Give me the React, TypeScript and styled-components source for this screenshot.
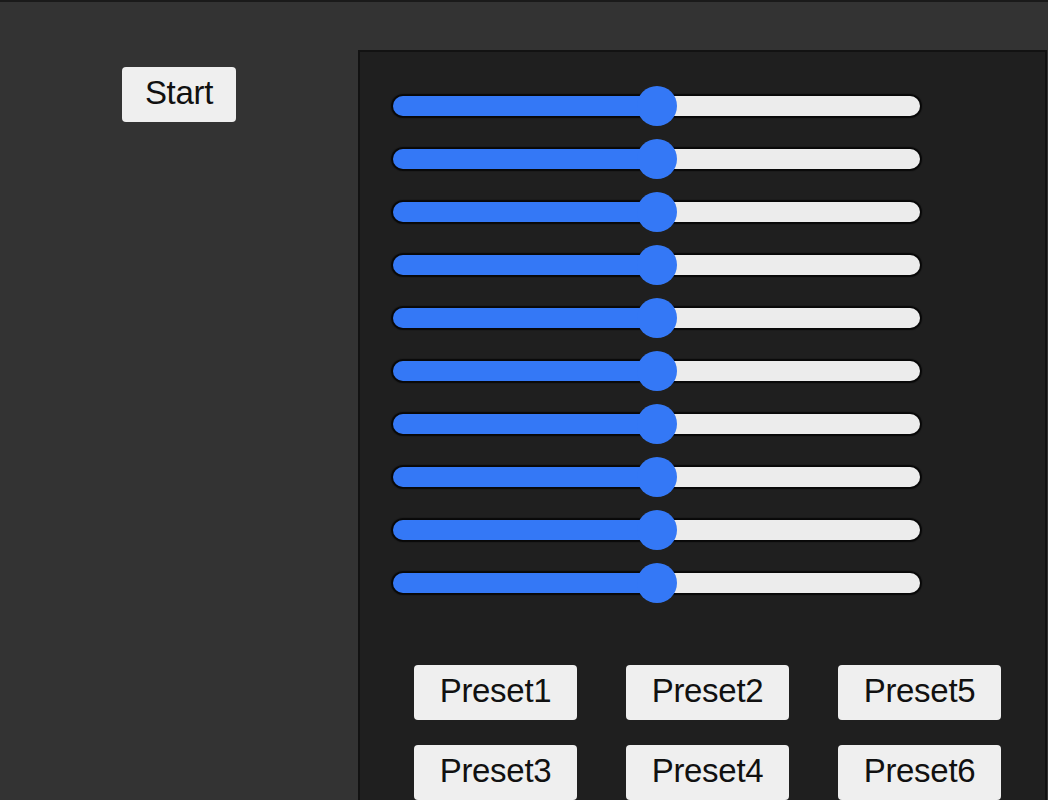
import React, { useState } from "react";
import styled, { createGlobalStyle } from "styled-components";

const GlobalStyle = createGlobalStyle`
  html, body {
    margin: 0;
    padding: 0;
    background: #333333;
    height: 800px;
    overflow: hidden;
  }
`;

const Screen = styled.div`
  display: flex;
  height: 798px;
  border-top: 2px solid #1a1a1a;
  font-family: "Liberation Sans", Arial, sans-serif;
`;

const SideColumn = styled.div`
  width: 358px;
  flex-shrink: 0;
  display: flex;
  justify-content: center;
  align-items: flex-start;
  padding-top: 65px;
`;

const Button = styled.button<{ $width: number }>`
  width: ${(p) => p.$width}px;
  height: 55px;
  padding: 0 0 5px;
  border: none;
  border-radius: 4px;
  background: #efefef;
  color: #111111;
  font-family: "Liberation Sans", Arial, sans-serif;
  font-size: 33px;
  line-height: 1;
  letter-spacing: -0.3px;
  cursor: pointer;
`;

const Panel = styled.div`
  margin-top: 48px;
  width: 685px;
  height: 760px;
  background: #1f1f1f;
  border: 2px solid #121212;
  border-bottom: none;
`;

const SliderList = styled.div`
  display: flex;
  flex-direction: column;
  padding: 27px 0 0 33px;
`;

const SliderRow = styled.div`
  height: 53px;
  display: flex;
  align-items: center;
`;

const Range = styled.input<{ $pct: number }>`
  -webkit-appearance: none;
  appearance: none;
  width: 527px;
  height: 20px;
  margin: 0;
  border-radius: 10px;
  box-shadow: 0 0 1px 2px #080808;
  outline: none;
  background: linear-gradient(
    to right,
    #3478f6 0%,
    #3478f6 ${(p) => p.$pct}%,
    #ececec ${(p) => p.$pct}%,
    #ececec 100%
  );

  &::-webkit-slider-thumb {
    -webkit-appearance: none;
    appearance: none;
    width: 40px;
    height: 40px;
    border-radius: 50%;
    background: #3478f6;
    border: none;
    cursor: pointer;
  }
`;

const PresetGrid = styled.div`
  display: grid;
  grid-template-columns: repeat(3, 163px);
  column-gap: 49px;
  row-gap: 25px;
  padding: 56px 0 0 54px;
`;

const presets = ["Preset1", "Preset2", "Preset5", "Preset3", "Preset4", "Preset6"];

const App: React.FC = () => {
  const [values, setValues] = useState<number[]>(Array(10).fill(50));

  const onChangeValue = (index: number) => (e: React.ChangeEvent<HTMLInputElement>) => {
    const next = [...values];
    next[index] = Number(e.target.value);
    setValues(next);
  };

  return (
    <>
      <GlobalStyle />
      <Screen>
        <SideColumn>
          <Button $width={114}>Start</Button>
        </SideColumn>
        <Panel>
          <SliderList>
            {values.map((v, i) => (
              <SliderRow key={i}>
                <Range
                  type="range"
                  min={0}
                  max={100}
                  value={v}
                  $pct={v}
                  onChange={onChangeValue(i)}
                />
              </SliderRow>
            ))}
          </SliderList>
          <PresetGrid>
            {presets.map((name) => (
              <Button key={name} $width={163}>
                {name}
              </Button>
            ))}
          </PresetGrid>
        </Panel>
      </Screen>
    </>
  );
};

export default App;
